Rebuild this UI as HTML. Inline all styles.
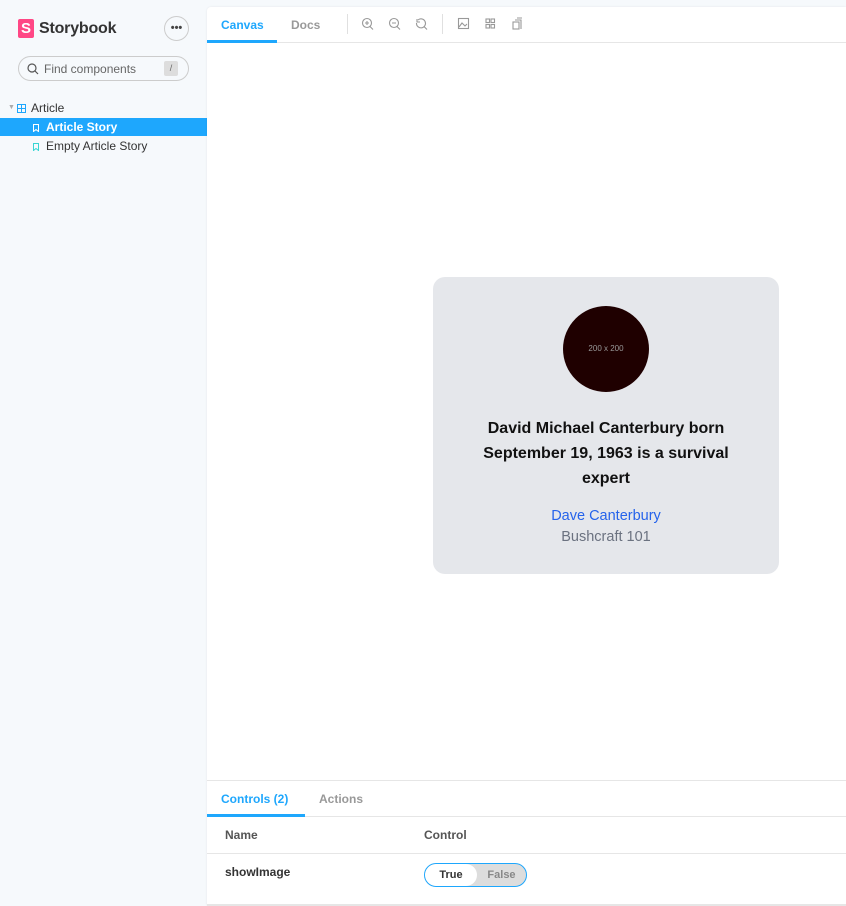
<!DOCTYPE html>
<html><head><style>
*{box-sizing:border-box;margin:0;padding:0}
body{width:846px;height:906px;background:#f6f9fc;font-family:"Liberation Sans",sans-serif;position:relative;overflow:hidden;color:#333}
.abs{position:absolute}
.logo{left:18px;top:19px;width:16px;height:19px;background:#ff4785;border-radius:2px;color:#fff;font-weight:bold;font-size:15px;text-align:center;line-height:19px}
.brand{left:39px;top:20px;font-size:16px;font-weight:bold;color:#333;letter-spacing:-0.2px}
.more{left:164px;top:16px;width:25px;height:25px;border:1px solid #ccc;border-radius:50%;text-align:center;font-size:11px;line-height:22px;color:#444;font-weight:bold}
.search{left:18px;top:56px;width:171px;height:25px;border:1px solid #ccc;border-radius:13px;background:#f6f9fc}
.search span{position:absolute;left:25px;top:5px;font-size:12px;color:#666}
.slash{position:absolute;right:10px;top:4px;width:14px;height:15px;background:#ddd;border-radius:2px;font-size:9px;text-align:center;line-height:15px;color:#666}
.tree{font-size:12px}
.sel{left:0;top:118px;width:207px;height:18px;background:#1ea7fd}
.main{left:207px;top:7px;width:639px;height:899px;background:#fff;border-top-left-radius:4px;box-shadow:0 0 2px rgba(0,0,0,.08)}
.tab{font-size:12px;font-weight:bold}
.card{left:433px;top:277px;width:346px;height:297px;background:#e5e7eb;border-radius:12px;text-align:center}
.circ{position:absolute;left:130px;top:29px;width:86px;height:86px;border-radius:50%;background:#1f0000;color:#999;font-size:8px;line-height:86px}
.title{position:absolute;left:0;width:346px;top:139px;font-size:16px;font-weight:bold;line-height:25px;color:#111}
</style></head><body>
<div class="abs logo">S</div>
<div class="abs brand">Storybook</div>
<div class="abs more">•••</div>
<div class="abs search"><svg class="abs" style="left:8px;top:6px" width="12" height="12" viewBox="0 0 12 12"><circle cx="5" cy="5" r="4" fill="none" stroke="#555" stroke-width="1.2"/><path d="M8 8l3 3" stroke="#555" stroke-width="1.2"/></svg><span>Find components</span><div class="slash">/</div></div>
<div class="abs tree" style="left:8px;top:104px;color:#aaa;font-size:7px">▼</div>
<svg class="abs" style="left:17px;top:104px" width="9" height="9" viewBox="0 0 9 9"><rect x=".5" y=".5" width="8" height="8" fill="none" stroke="#1ea7fd"/><path d="M4.5 0v9M0 4.5h9" stroke="#1ea7fd"/></svg>
<div class="abs tree" style="left:31px;top:101px">Article</div>
<div class="abs sel"></div>
<svg class="abs" style="left:33px;top:124px" width="6" height="8" viewBox="0 0 6 8"><path d="M.5.5h5v7l-2.5-2-2.5 2z" fill="none" stroke="#fff"/></svg>
<div class="abs tree" style="left:46px;top:120px;color:#fff;font-weight:bold">Article Story</div>
<svg class="abs" style="left:33px;top:143px" width="6" height="8" viewBox="0 0 6 8"><path d="M.5.5h5v7l-2.5-2-2.5 2z" fill="none" stroke="#37d5d3"/></svg>
<div class="abs tree" style="left:46px;top:139px">Empty Article Story</div>

<div class="abs main"></div>
<div class="abs" style="left:207px;top:42px;width:639px;height:1px;background:#e6e6e6"></div>
<div class="abs tab" style="left:221px;top:18px;color:#1ea7fd">Canvas</div>
<div class="abs" style="left:207px;top:40px;width:70px;height:3px;background:#1ea7fd"></div>
<div class="abs tab" style="left:291px;top:18px;color:#999">Docs</div>
<div class="abs" style="left:347px;top:14px;width:1px;height:20px;background:#e0e0e0"></div>
<div class="abs" style="left:442px;top:14px;width:1px;height:20px;background:#e0e0e0"></div>
<svg class="abs" style="left:360px;top:17px" width="180" height="14" viewBox="0 0 180 14" fill="none" stroke="#999" stroke-width="1.1">
<circle cx="7" cy="6" r="4.5"/><path d="M10 9.5l3 3M5 6h4M7 4v4"/>
<circle cx="34" cy="6" r="4.5"/><path d="M37 9.5l3 3M32 6h4"/>
<path d="M58 3a4.5 4.5 0 1 1-1.5 3M64 9.5l3 3M57 2v3h3"/>
<rect x="98.5" y="1.5" width="10" height="10"/><path d="M99 10l3-4 3 3 2-2"/>
<rect x="126" y="2" width="3.5" height="3.5"/><rect x="131" y="2" width="3.5" height="3.5"/><rect x="126" y="7.5" width="3.5" height="3.5"/><rect x="131" y="7.5" width="3.5" height="3.5"/>
<rect x="153" y="5" width="6" height="7"/><path d="M155 3h6v9M157 1h5"/>
</svg>

<div class="abs card"><div class="circ">200 x 200</div>
<div class="title">David Michael Canterbury born<br>September 19, 1963 is a survival<br>expert</div>
<div style="position:absolute;top:231px;width:346px;font-size:14.5px;color:#2563eb">Dave Canterbury</div>
<div style="position:absolute;top:252px;width:346px;font-size:14.5px;color:#6b7280">Bushcraft 101</div>
</div>

<div class="abs" style="left:207px;top:780px;width:639px;height:1px;background:#e6e6e6"></div>
<div class="abs" style="left:207px;top:816px;width:639px;height:1px;background:#e6e6e6"></div>
<div class="abs tab" style="left:221px;top:792px;color:#1ea7fd">Controls (2)</div>
<div class="abs" style="left:207px;top:814px;width:98px;height:3px;background:#1ea7fd"></div>
<div class="abs tab" style="left:319px;top:792px;color:#999">Actions</div>
<div class="abs" style="left:225px;top:828px;font-size:12px;font-weight:bold;color:#555">Name</div>
<div class="abs" style="left:424px;top:828px;font-size:12px;font-weight:bold;color:#555">Control</div>
<div class="abs" style="left:207px;top:853px;width:639px;height:1px;background:#e6e6e6"></div>
<div class="abs" style="left:225px;top:865px;font-size:12px;font-weight:bold;color:#333">showImage</div>
<div class="abs" style="left:424px;top:863px;width:103px;height:24px;border:1px solid #1ea7fd;border-radius:12px;background:#ddd;overflow:hidden">
<div style="position:absolute;left:0;top:0;width:52px;height:22px;background:#fff;border-radius:11px;font-size:11px;font-weight:bold;text-align:center;line-height:22px;color:#333">True</div>
<div style="position:absolute;left:52px;top:0;width:49px;font-size:11px;font-weight:bold;text-align:center;line-height:22px;color:#888">False</div></div>
<div class="abs" style="left:207px;top:904px;width:639px;height:2px;background:#e6e6e6"></div>
</body></html>
